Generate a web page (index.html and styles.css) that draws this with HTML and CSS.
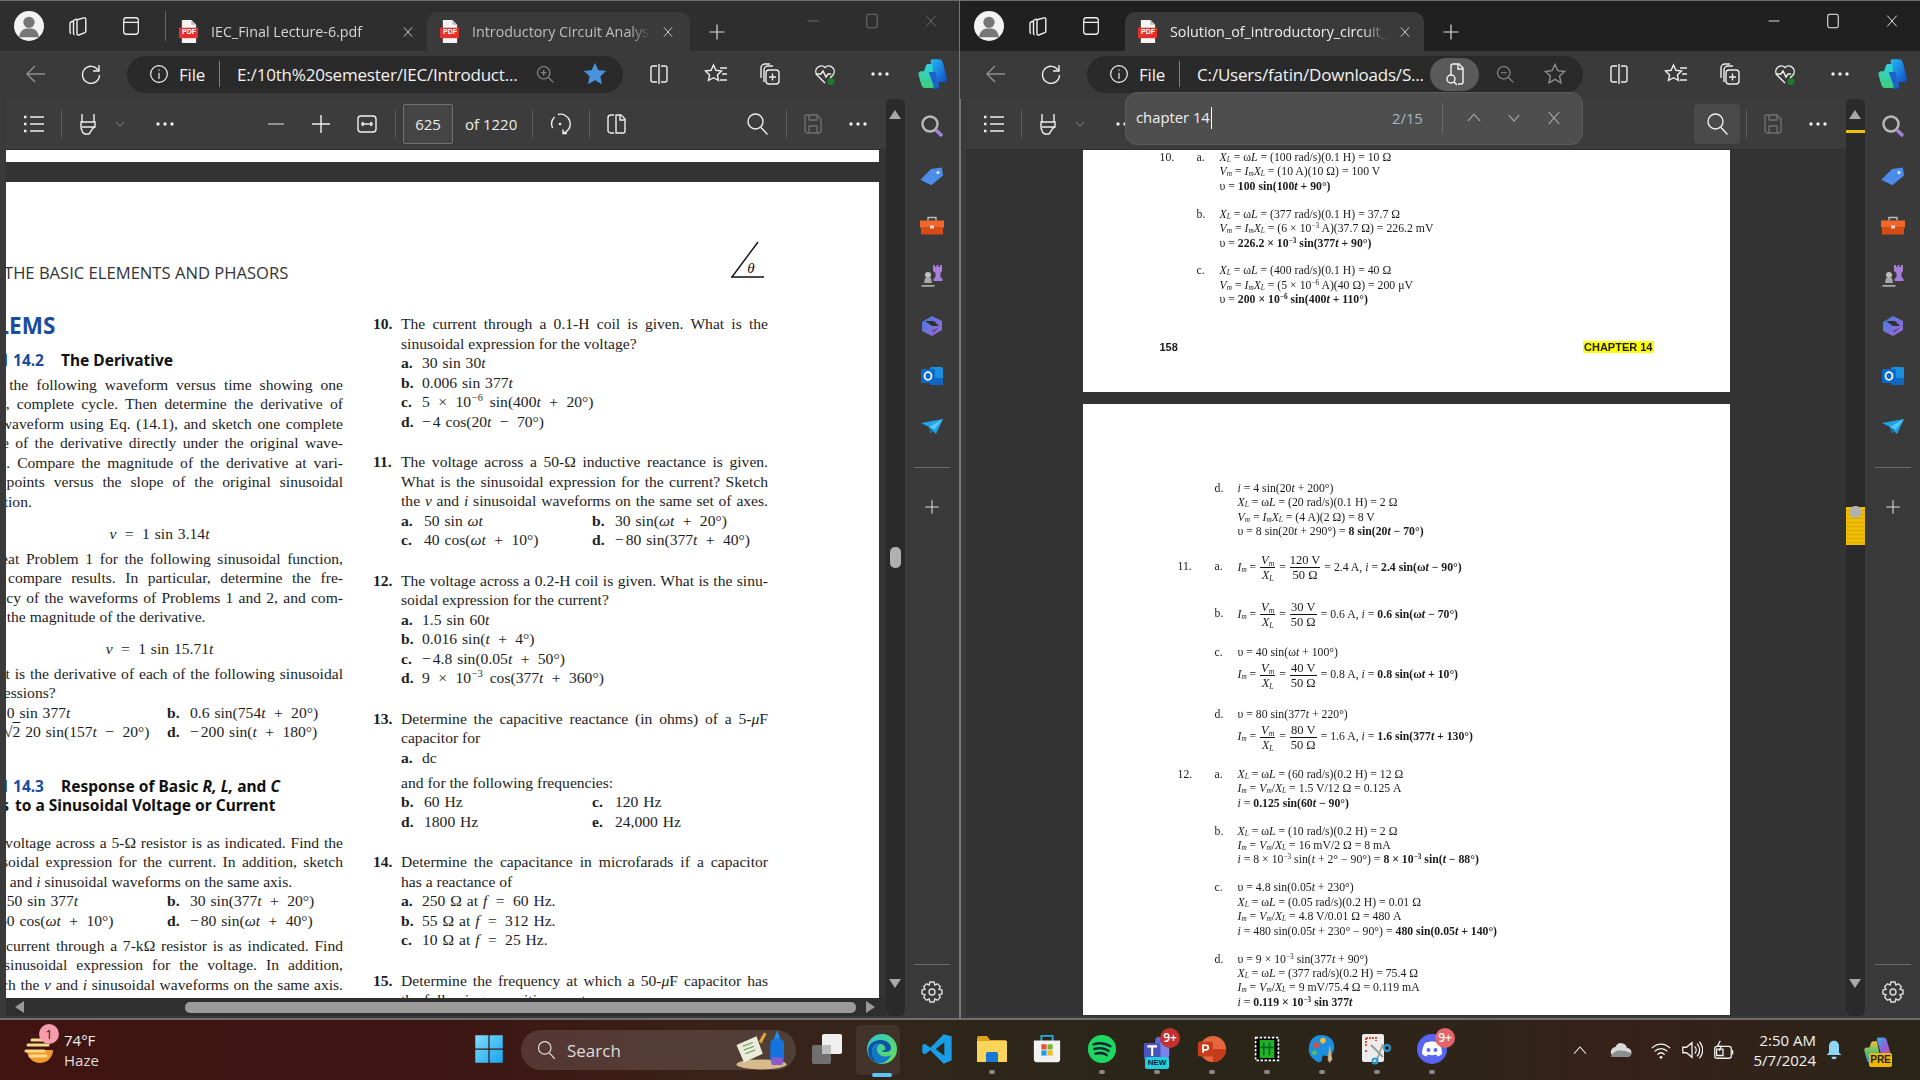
FILE: index.html
```html
<!DOCTYPE html>
<html lang="en">
<head>
<meta charset="utf-8">
<title>Split view PDFs</title>
<link rel="stylesheet" href="styles.css">
</head>
<body>
<svg class="sprite" aria-hidden="true">
<defs>
<linearGradient id="gCop" x1="0" y1="0" x2="1" y2="1"><stop offset="0" stop-color="#25b8ee"/><stop offset=".5" stop-color="#1c86e0"/><stop offset="1" stop-color="#1048c0"/></linearGradient>
<linearGradient id="gCop2" x1="0" y1="0" x2="0" y2="1"><stop offset="0" stop-color="#2fd0e0"/><stop offset="1" stop-color="#3fd07a"/></linearGradient>
<linearGradient id="gCop3" x1="0" y1="0" x2="1" y2="1"><stop offset="0" stop-color="#36b4e8"/><stop offset=".5" stop-color="#8a62d8"/><stop offset="1" stop-color="#e8488a"/></linearGradient>
<linearGradient id="gCop4" x1="0" y1="0" x2="0" y2="1"><stop offset="0" stop-color="#f0c040"/><stop offset=".5" stop-color="#5ac26a"/><stop offset="1" stop-color="#2c8fe0"/></linearGradient>
<linearGradient id="gEdge" x1="0" y1="0" x2="1" y2="1"><stop offset="0" stop-color="#2bc4d8"/><stop offset=".6" stop-color="#52d67c"/><stop offset="1" stop-color="#70e060"/></linearGradient>
<linearGradient id="gWin" x1="0" y1="0" x2="1" y2="1"><stop offset="0" stop-color="#7fdcfb"/><stop offset="1" stop-color="#16a4ec"/></linearGradient>
<linearGradient id="gBing" x1="0" y1="0" x2="1" y2="1"><stop offset="0" stop-color="#3c7ce0"/><stop offset="1" stop-color="#a868d8"/></linearGradient>
<symbol id="ws" viewBox="0 0 24 24"><path stroke-linejoin="round" d="M11 7c0-.8.5-1.300 1-1.500l6-1.700c1-.2 1.800.3 1.800 1.300V17c0 .9-.5 1.400-1 1.600l-6 2.400c-1 .3-1.800-.3-1.800-1.300z"/><path d="M11 5 8.500 5.800c-.6.2-1 .8-1 1.500v12c0 .8.4 1.200 1 1.500M7.500 7 5 8c-.6.2-1 .8-1 1.500v8.500c0 .8.4 1.200 1 1.500"/></symbol>
<symbol id="vt" viewBox="0 0 24 24"><rect x="4" y="3" width="16" height="18" rx="3"/><path d="M4 8h16"/></symbol>
<symbol id="x" viewBox="0 0 24 24"><path d="M5 4l14 16M19 4 5 20"/></symbol>
<symbol id="plus" viewBox="0 0 24 24"><path d="M12 3v18M3 12h18"/></symbol>
<symbol id="minus" viewBox="0 0 24 24"><path d="M4 12h16"/></symbol>
<symbol id="max" viewBox="0 0 24 24"><rect x="5" y="3" width="14" height="18" rx="2.500"/></symbol>
<symbol id="back" viewBox="0 0 24 24"><path d="M21 12H3M11 4l-8 8 8 8"/></symbol>
<symbol id="reload" viewBox="0 0 24 24"><path d="M19 8a8.500 8.500 0 1 0 1.500 5M20 3v6h-6"/></symbol>
<symbol id="info" viewBox="0 0 24 24"><circle cx="12" cy="12" r="10"/><path d="M12 10.500V18M12 6.500v1.500"/></symbol>
<symbol id="zoomin" viewBox="0 0 24 24"><circle cx="10.500" cy="10.500" r="7.500"/><path d="m16 16 6 6M7 10.500h7M10.500 7v7"/></symbol>
<symbol id="zoomout" viewBox="0 0 24 24"><circle cx="10.500" cy="10.500" r="7.500"/><path d="m16 16 6 6M7 10.500h7"/></symbol>
<symbol id="star" viewBox="0 0 24 24"><path d="m12 2.500 2.900 6.200 6.700.8-5 4.600 1.400 6.700L12 17.400 6 20.800l1.400-6.700-5-4.600 6.700-.8z"/></symbol>
<symbol id="split" viewBox="0 0 24 24"><path d="M12 2v20M10 4H6a2 2 0 0 0-2 2v12a2 2 0 0 0 2 2h4M14 4h4a2 2 0 0 1 2 2v12a2 2 0 0 1-2 2h-4"/></symbol>
<symbol id="fav" viewBox="0 0 24 24"><path d="m9.500 3 2.400 5.300 5.600.7-4.100 3.900 1.100 5.600-5-2.800-5 2.800 1.100-5.600L1.500 9l5.600-.7zM16 6h7M18 12h5M16 18h7"/></symbol>
<symbol id="coll" viewBox="0 0 24 24"><path d="M6 20V8a4 4 0 0 1 4-4h5M3 16V6a4 4 0 0 1 4-4h5"/><rect x="8" y="8" width="13" height="14" rx="3"/><path d="M14.500 11.500v7M11 15h7"/></symbol>
<symbol id="health" viewBox="0 0 24 24"><path d="M12 21 4 13a5.500 5.500 0 0 1 8-7.500A5.500 5.500 0 0 1 20 13l-3 3M2.500 12H8l2-3 3 6 2-3h3"/><circle cx="18" cy="19.500" r="3.500" fill="#1f7a2e" stroke="none"/></symbol>
<symbol id="dots" viewBox="0 0 24 24"><circle cx="5" cy="12" r="1.700" fill="currentColor" stroke="none"/><circle cx="12" cy="12" r="1.700" fill="currentColor" stroke="none"/><circle cx="19" cy="12" r="1.700" fill="currentColor" stroke="none"/></symbol>
<symbol id="copilot" viewBox="0 0 24 24"><path d="M12 1h5c1.800 0 2.800 1 3.200 2.500l3 12c.4 1.500-.4 2.500-2 2.500h-5L11 3.500c-.3-1 .2-2.500 1-2.500z" fill="url(#gCop)" stroke="none"/><path d="M9 4.500h3l3 15.500c.3 1.500-.6 2.500-2 2.500H7c-1.700 0-2.600-1-3-2.500L2 13c-.5-2 .2-3 2-3h2l1-3c.3-1.200 1-2.500 2-2.500z" fill="url(#gCop2)" stroke="none"/><path d="M9.500 10.500h5l3 10c.3 1.200-.6 2.500-2 2.500h-4c1.500-.5 2-1.500 1.500-3z" fill="#1c62cc" stroke="none"/></symbol>
<symbol id="copilot2" viewBox="0 0 24 24"><path d="M13 2h4c1.800 0 2.600 1 3 2.500l3 11c.4 1.500-.4 2.500-2 2.500h-5L12 4c-.3-1 .2-2 1-2z" fill="url(#gCop3)" stroke="none"/><path d="M9 5h3l3 15c.3 1.500-.6 2.500-2 2.500H7c-1.700 0-2.600-1-3-2.500L2 13c-.5-2 .2-3 2-3h2l1-3c.3-1.200 1-2 2-2z" fill="url(#gCop4)" stroke="none"/></symbol>
<symbol id="list" viewBox="0 0 24 24"><path d="M8 5h14M8 12h14M8 19h14"/><path d="M2 5h2.500M2 12h2.500M2 19h2.500" stroke-width="2.500"/></symbol>
<symbol id="hl" viewBox="0 0 24 24"><path d="M6 2v8M18 2v8M5 10h14v5l-2 1-4 6h-4l-2-1-2-5zM6 15h12"/></symbol>
<symbol id="chev" viewBox="0 0 24 24"><path d="m5 8 7 8 7-8"/></symbol>
<symbol id="up" viewBox="0 0 24 24"><path d="m4 16 8-9 8 9"/></symbol>
<symbol id="fit" viewBox="0 0 24 24"><rect x="3" y="4" width="18" height="16" rx="3"/><path d="M6.500 12h11M6.500 12l2-2M6.500 12l2 2M17.500 12l-2-2M17.500 12l-2 2"/></symbol>
<symbol id="rot" viewBox="0 0 24 24"><path d="M9 2.500a9.500 9.500 0 0 1 5 18.800M14 17.500v4h4M5.500 5a9.500 9.500 0 0 0-1.800 11"/><circle cx="11" cy="12" r="1.300" fill="currentColor" stroke="none"/></symbol>
<symbol id="pv" viewBox="0 0 24 24"><path d="M12 3h5l4 4v12a2 2 0 0 1-2 2h-7zM16 3v5h5M10 3H7a3 3 0 0 0-3 3v13a3 3 0 0 0 3 2h3" /></symbol>
<symbol id="search" viewBox="0 0 24 24"><circle cx="10.500" cy="9.500" r="7.500"/><path d="m16 15.500 6.500 7"/></symbol>
<symbol id="save" viewBox="0 0 24 24"><path d="M6 3h10l4 4v11a3 3 0 0 1-3 3H7a3 3 0 0 1-3-3V5a2 2 0 0 1 2-2zM8 3v5h8V3M8 21v-7h8v7"/></symbol>
<symbol id="readfile" viewBox="0 0 24 24"><path d="M8 13V4a2 2 0 0 1 2-2h6l4 4v14a2 2 0 0 1-2 2h-3M15 2v5h5"/><circle cx="8" cy="17" r="4"/><path d="m11 20 3 3"/></symbol>
<symbol id="sSearch" viewBox="0 0 24 24"><circle cx="10" cy="10" r="7.500" stroke="#b8b8b8" stroke-width="2.500" fill="none"/><path d="m16 16 6 6" stroke="#a77fd8" stroke-width="3.500"/></symbol>
<symbol id="sTag" viewBox="0 0 24 24"><path d="M0 14 12 5h11v8l-13 8z" fill="#4b8de8" stroke="none" transform="rotate(-8 12 12)"/><circle cx="18" cy="8.500" r="1.600" fill="#dfe9f8" stroke="none"/></symbol>
<symbol id="sBox" viewBox="0 0 24 24"><path d="M8 6.500V3.500h8v3" stroke="#bdbdbd" stroke-width="1.400" fill="none"/><rect x="0" y="6.500" width="24" height="7" fill="#f2662a" stroke="none"/><rect x="1" y="13.500" width="22" height="7" fill="#d84b15" stroke="none"/><rect x="10" y="11.500" width="4" height="3" fill="#d8d8d8" stroke="none"/></symbol>
<symbol id="sChess" viewBox="0 0 24 24"><path d="M14 3h2v2h1.500V3h2v2h1.500V3h2v6l-1.500 2v4l2 2v2h-9v-2l2-2v-4L14 9z" fill="#a87fd8" stroke="none" transform="translate(-1 -2)"/><circle cx="8" cy="11" r="3" fill="#bfbfbf" stroke="none"/><path d="M5 14h6l1 5H4zM1.500 21h13v1.800h-13z" fill="#a8a8a8" stroke="none"/></symbol>
<symbol id="sBing" viewBox="0 0 24 24"><path d="M12 2 22 7v9l-10 6L2 17V8z" fill="url(#gBing)" stroke="none"/><path d="M5 7h9l5 5H12z" fill="#2f2f2f" stroke="none"/><path d="M12 16.500 20 13l-7 6z" fill="#2f2f2f" stroke="none" opacity=".5"/></symbol>
<symbol id="sOut" viewBox="0 0 24 24"><rect x="10" y="3" width="13" height="18" rx="1.500" fill="#1a8fe0" stroke="none"/><path d="M10 14h13v7H10z" fill="#1066c4" stroke="none"/><rect x="1" y="5" width="14" height="14" rx="1.500" fill="#0b6ac8" stroke="none"/><ellipse cx="8" cy="12" rx="3.500" ry="3.800" fill="none" stroke="#fff" stroke-width="1.800"/></symbol>
<symbol id="sTg" viewBox="0 0 24 24"><path d="M1 9 23 5 16 20 9 13z" fill="#1fa3e8" stroke="none"/><path d="M9 13l14-8-9 11-3 3z" fill="#5cc8f6" stroke="none"/><path d="M9 13l2 6 3-3z" fill="#0d6fb0" stroke="none"/></symbol>
<symbol id="gear" viewBox="0 0 24 24"><path d="M10 2h4l.8 3 2.700-1.200 2.800 2.800L19 9.300l3 .7v4l-3 .7 1.300 2.700-2.800 2.800-2.700-1.200-.8 3h-4l-.8-3-2.700 1.200-2.800-2.800L5 14.700 2 14v-4l3-.7-1.300-2.700 2.800-2.800L9.200 5z"/><circle cx="12" cy="12" r="3"/></symbol>
<symbol id="weather" viewBox="0 0 32 32"><path d="M3 15h26a13 13 0 0 1-26 0z" fill="#f29b2c" stroke="none" transform="translate(0 1)"/><path d="M8 6h10M4 11h20M2 17h18M6 22h16" stroke="#f7d98a" stroke-width="3" fill="none" stroke-linecap="round"/></symbol>
<symbol id="win" viewBox="0 0 24 24"><path d="M1 1h10.500v10.500H1zM12.500 1H23v10.500H12.500zM1 12.500h10.500V23H1zM12.500 12.500H23V23H12.500z" fill="url(#gWin)" stroke="none"/></symbol>
<symbol id="scene" viewBox="0 0 44 32"><ellipse cx="24" cy="27.500" rx="20" ry="4" fill="#d8b98a" stroke="none"/><path d="M4 12 20 5l5 14-15 7z" fill="#e8ecd8" stroke="none"/><path d="M9 13l8-3M10 16l8-3M11 19l8-3" stroke="#6a9a5a" stroke-width="1"/><path d="M22 9l4-7 2 1-4 8z" fill="#e8a030" stroke="none"/><rect x="31" y="7" width="11" height="20" rx="4" fill="#1573e0" stroke="none"/><path d="M36.500 0l2.500 7h-5z" fill="#1a90f0" stroke="none"/><rect x="32" y="22" width="9" height="6" rx="1" fill="#8a5ac8" stroke="none"/></symbol>
<symbol id="tview" viewBox="0 0 32 32"><rect x="1" y="12" width="19" height="19" rx="2" fill="#6f6f6f" stroke="none"/><rect x="11" y="1" width="20" height="20" rx="2" fill="#efefef" stroke="none"/><rect x="11" y="12" width="9" height="9" fill="#bdbdbd" stroke="none"/></symbol>
<symbol id="edge" viewBox="0 0 32 32"><circle cx="16" cy="16" r="15" fill="url(#gEdge)" stroke="none"/><path d="M2 17C3 9 10 7 15 7c6 0 10 4 10 8 0 3-3 4-6 4-2 0-3-1-3-2 3 1 4-1 3-3-1-3-5-4-8-3-4 1-5 5-5 8 0 5 4 10 10 11-8 1-14-5-14-13z" fill="#0a55a8" stroke="none"/><path d="M6 19c0-4 3-9 8-8-3 2-4 5-2 9 2 3 7 5 13 2-2 5-7 9-12 8-5-2-7-6-7-11z" fill="#1478c8" stroke="none"/></symbol>
<symbol id="vsc" viewBox="0 0 24 24"><path fill-rule="evenodd" d="M17 1 7 11 3 8 1 9v6l2 1 4-3 10 10 6-2.500v-18zM17.500 7 11 12l6.500 5z" fill="#1a9de8" stroke="none"/></symbol>
<symbol id="folder" viewBox="0 0 32 32"><path d="M1 5a2 2 0 0 1 2-2h8l3 4h16v3H1z" fill="#e0a020" stroke="none"/><path d="M1 8h30v21H1z" fill="#fbd45a" stroke="none"/><path d="M10 21a2 2 0 0 1 2-2h8a2 2 0 0 1 2 2v8H10z" fill="#1678d0" stroke="none"/></symbol>
<symbol id="store" viewBox="0 0 32 32"><path d="M10 8V2h12v6" stroke="#2aa8e0" stroke-width="2" fill="none"/><path d="M2 7h28v20a3 3 0 0 1-3 3H5a3 3 0 0 1-3-3z" fill="#f2f2f2" stroke="none"/><rect x="10" y="11" width="5.500" height="5.500" fill="#e8502a" stroke="none"/><rect x="16.500" y="11" width="5.500" height="5.500" fill="#74b82a" stroke="none"/><rect x="10" y="17.500" width="5.500" height="5.500" fill="#1aa0e8" stroke="none"/><rect x="16.500" y="17.500" width="5.500" height="5.500" fill="#f4b81e" stroke="none"/></symbol>
<symbol id="spot" viewBox="0 0 32 32"><circle cx="16" cy="16" r="15" fill="#1ed760" stroke="none"/><path d="M7 11c6-2 13-1 18 2M8 16c5-1.500 11-1 15 2M9 21c4-1 9-1 12 1.500" stroke="#123" stroke-width="2.600" fill="none" stroke-linecap="round"/></symbol>
<symbol id="teams" viewBox="0 0 32 32"><rect x="14" y="6" width="16" height="20" rx="3" fill="#7b83eb" stroke="none"/><circle cx="18" cy="6" r="4" fill="#6068c8" stroke="none"/><rect x="1" y="9" width="19" height="19" rx="2" fill="#4b53bc" stroke="none"/><path d="M5 13h11M10.500 13v11" stroke="#fff" stroke-width="2.400"/></symbol>
<symbol id="ppt" viewBox="0 0 32 32"><circle cx="17" cy="16" r="14" fill="#e8663c" stroke="none"/><path d="M17 16h14a14 14 0 0 1-14 14z" fill="#c43c1c" stroke="none"/><rect x="1" y="8" width="16" height="16" rx="2" fill="#c43e1c" stroke="none"/><path d="M6.500 20v-8h3a2.500 2.500 0 0 1 0 5h-3" stroke="#fff" stroke-width="1.800" fill="none"/></symbol>
<symbol id="chip" viewBox="0 0 32 32"><rect x="2" y="2" width="28" height="28" fill="#000" stroke="#fff" stroke-width="2" stroke-dasharray="3 2"/><rect x="7" y="5" width="18" height="22" fill="#22b522" stroke="none"/><path d="M12 8v16M19 8v16M8 14h16" stroke="#063" stroke-width="2"/></symbol>
<symbol id="paint" viewBox="0 0 32 32"><path d="M15 1c9 0 15 6 14 14-1 7-6 10-10 8-3-1-3 2-3 4 0 3-3 4-6 2C4 25 1 20 2 14 3 6 8 1 15 1z" fill="#1c8ee0" stroke="none"/><circle cx="10" cy="12" r="3" fill="#e04a3a" stroke="none"/><circle cx="17" cy="7" r="3" fill="#f0c030" stroke="none"/><circle cx="8" cy="20" r="2.500" fill="#60c040" stroke="none"/><path d="M24 11l3 16-3 4-2-4z" fill="#c8b088" stroke="none"/></symbol>
<symbol id="snip" viewBox="0 0 32 32"><rect x="1" y="1" width="22" height="28" rx="2" fill="#ececec" stroke="none"/><path d="M5 5h10v3M5 5v8M5 17v3" stroke="#e0503a" stroke-width="2" stroke-dasharray="2 1" fill="none"/><path d="M10 12l12 12M22 11l-7 18" stroke="#9a9a9a" stroke-width="1.800"/><circle cx="26" cy="15" r="3" stroke="#2a9ad8" stroke-width="2" fill="none"/><circle cx="14" cy="28" r="2.500" stroke="#2a9ad8" stroke-width="2" fill="none"/></symbol>
<symbol id="disc" viewBox="0 0 32 32"><circle cx="16" cy="16" r="15" fill="#5865f2" stroke="none"/><path d="M9 10c4-2 10-2 14 0 2 3 3 7 3 11-2 1.500-3 2-4.500 2.500l-1-2c-3 1-6 1-9 0l-1 2C9 23 8 22.500 6 21c0-4 1-8 3-11z" fill="#fff" stroke="none"/><circle cx="12.500" cy="17" r="2" fill="#5865f2" stroke="none"/><circle cx="19.500" cy="17" r="2" fill="#5865f2" stroke="none"/></symbol>
<symbol id="tup" viewBox="0 0 24 24"><path d="m4 17 8-9 8 9"/></symbol>
<symbol id="cloud" viewBox="0 0 24 24"><path d="M7 19a5 5 0 0 1-.5-10A6 6 0 0 1 18 10a4.500 4.500 0 0 1 0 9z" fill="#d8d8d8" stroke="none"/><path d="M2 19c2-6 8-9 20-4v1a4 4 0 0 1-4 3z" fill="#8f8f8f" stroke="none"/></symbol>
<symbol id="wifi" viewBox="0 0 24 24"><path d="M2 10c6-6 14-6 20 0M5 13.500c4-4 10-4 14 0M8 17c2.500-2.500 5.500-2.500 8 0"/><circle cx="12" cy="20" r="1.500" fill="currentColor" stroke="none"/></symbol>
<symbol id="vol" viewBox="0 0 24 24"><path d="M2 9v6h4l6 5V4L6 9zM15 8a6 6 0 0 1 0 8M17.500 5a10 10 0 0 1 0 14M20 3a13 13 0 0 1 0 18"/></symbol>
<symbol id="batt" viewBox="0 0 24 24"><rect x="3" y="8" width="18" height="13" rx="2.500"/><path d="M22.500 12v5M5 11h7v7H5z"/><path d="M9 2 6 8h4L8 13" /></symbol>
<symbol id="bell" viewBox="0 0 24 24"><path d="M12 1c4 0 6 3 6 7v7l3 3H3l3-3V8c0-4 2-7 6-7z" fill="#8fd8f5" stroke="none"/><path d="M9 20a3 3 0 0 0 6 0z" fill="#8fd8f5" stroke="none"/></symbol>
<symbol id="pdf" viewBox="0 0 20 24"><path d="M3 0h10l5 5v19H3z" fill="#f4f4f4" stroke="none"/><rect x="0" y="8" width="20" height="11" fill="#e3322e" stroke="none"/><path d="M13 0v5h5z" fill="#bbb" stroke="none"/></symbol>
<symbol id="angle" viewBox="0 0 34 38"><path d="M1 36 27 1M0 36h33" stroke="#111" stroke-width="1.400" fill="none"/></symbol>
</defs>
</svg>

<div class="desktop">
<main class="windows">

<section class="win win-left">
  <header class="titlebar">
    <div class="c-avatar"><span class="avatar"><svg class="ava-ic" viewBox="0 0 24 24"><circle cx="12" cy="9" r="4.500" fill="#777"/><path d="M4 21c1-6 4-7 8-7s7 1 8 7z" fill="#777"/></svg></span></div>
    <div class="c-ws"><svg class="ic i24"><use href="#ws"/></svg></div>
    <div class="c-vt"><svg class="ic i22"><use href="#vt"/></svg></div>
    <span class="vsep"></span>
    <div class="tab tab-idle">
      <span class="pdf-ic"><svg class="pdf-svg"><use href="#pdf"/></svg><span class="pdf-tx">PDF</span></span>
      <span class="tab-name">IEC_Final Lecture-6.pdf</span>
      <svg class="ic i14 tab-x"><use href="#x"/></svg>
    </div>
    <div class="tab tab-on tab-wide">
      <span class="pdf-ic"><svg class="pdf-svg"><use href="#pdf"/></svg><span class="pdf-tx">PDF</span></span>
      <span class="tab-name dim-name">Introductory Circuit Analysis</span>
      <svg class="ic i14 tab-x"><use href="#x"/></svg>
    </div>
    <svg class="ic i20 new-tab"><use href="#plus"/></svg>
    <div class="winctl winctl-dim">
      <svg class="ic i16"><use href="#minus"/></svg>
      <svg class="ic i18"><use href="#max"/></svg>
      <svg class="ic i16"><use href="#x"/></svg>
    </div>
  </header>
  <nav class="navbar">
    <svg class="ic i24 faint"><use href="#back"/></svg>
    <svg class="ic i24 m31"><use href="#reload"/></svg>
    <div class="addr m24">
      <svg class="ic i20"><use href="#info"/></svg>
      <span class="addr-file">File</span>
      <span class="addr-sep"></span>
      <span class="addr-url">E:/10th%20semester/IEC/Introduct...</span>
      <svg class="ic i20 faint"><use href="#zoomin"/></svg>
      <svg class="ic i24 m28 star-on"><use href="#star"/></svg>
    </div>
    <svg class="ic i24 m24"><use href="#split"/></svg>
    <svg class="ic i24 m33"><use href="#fav"/></svg>
    <svg class="ic i24 m30"><use href="#coll"/></svg>
    <svg class="ic i24 m31"><use href="#health"/></svg>
    <svg class="ic i24 m31"><use href="#dots"/></svg>
    <svg class="ic i32 m24"><use href="#copilot"/></svg>
  </nav>
  <div class="body">
    <div class="pane">
      <div class="pdfbar">
        <svg class="ic i24"><use href="#list"/></svg>
        <span class="tsep m15"></span>
        <svg class="ic i24 m14"><use href="#hl"/></svg>
        <svg class="ic i14 m13 faint"><use href="#chev"/></svg>
        <svg class="ic i24 m26"><use href="#dots"/></svg>
        <svg class="ic i24 m87 soft"><use href="#minus"/></svg>
        <svg class="ic i24 m21"><use href="#plus"/></svg>
        <svg class="ic i24 m22"><use href="#fit"/></svg>
        <span class="tsep m16"></span>
        <span class="pagebox m7">625</span>
        <span class="pagecount m12">of 1220</span>
        <span class="tsep m15"></span>
        <svg class="ic i24 m16"><use href="#rot"/></svg>
        <span class="tsep m16"></span>
        <svg class="ic i24 m14"><use href="#pv"/></svg>
        <div class="pdfbar-r">
          <svg class="ic i24"><use href="#search"/></svg>
          <span class="tsep m17"></span>
          <svg class="ic i24 m14 disabled"><use href="#save"/></svg>
          <svg class="ic i24 m21"><use href="#dots"/></svg>
        </div>
      </div>
      <div class="viewer viewer-left">
        <div class="prev-page"></div>
        <article class="book">
          <div class="runhead">
            <span class="runhead-t">THE BASIC ELEMENTS AND PHASORS</span>
            <span class="angle"><svg class="angle-svg"><use href="#angle"/></svg><i class="angle-t">θ</i></span>
          </div>
          <div class="cols">
            <div class="col col-a">
              <h2 class="prob-h">PROBLEMS</h2>
              <h3 class="sec sec-1"><span class="sec-no">SECTION 14.2</span><span class="sec-ti">The Derivative</span></h3>
              <div class="prob p-first">
                <span class="n">1.</span>
                <div class="bd">
                  <div class="j">Plot the following waveform versus time showing one</div>
                  <div class="j">clear, complete cycle. Then determine the derivative of</div>
                  <div class="j">the waveform using Eq. (14.1), and sketch one complete</div>
                  <div class="j">cycle of the derivative directly under the original wave-</div>
                  <div class="j">form. Compare the magnitude of the derivative at vari-</div>
                  <div class="j">ous points versus the slope of the original sinusoidal</div>
                  <div>function.</div>
                </div>
              </div>
              <div class="eq eq-1"><i>v</i> <span class="op">=</span> 1 sin 3.14<i>t</i></div>
              <div class="prob p-tight">
                <span class="n">2.</span>
                <div class="bd">
                  <div class="j">Repeat Problem 1 for the following sinusoidal function,</div>
                  <div class="j">and compare results. In particular, determine the fre-</div>
                  <div class="j">quency of the waveforms of Problems 1 and 2, and com-</div>
                  <div>pare the magnitude of the derivative.</div>
                </div>
              </div>
              <div class="eq eq-2"><i>v</i> <span class="op">=</span> 1 sin 15.71<i>t</i></div>
              <div class="prob p-tight">
                <span class="n">3.</span>
                <div class="bd">
                  <div class="j">What is the derivative of each of the following sinusoidal</div>
                  <div>expressions?</div>
                  <div class="opt2"><div><b class="lab">a.</b>10 sin 377<i>t</i></div><div><b class="lab">b.</b>0.6 sin(754<i>t</i> <span class="op">+</span> 20°)</div></div>
                  <div class="opt2"><div><b class="lab">c.</b><span class="root">√<span class="rad">2</span></span> 20 sin(157<i>t</i> <span class="op">−</span> 20°)</div><div><b class="lab">d.</b><span class="neg">−</span>200 sin(<i>t</i> <span class="op">+</span> 180°)</div></div>
                </div>
              </div>
              <h3 class="sec sec-2"><span class="sec-no">SECTION 14.3</span><span class="sec-ti">Response of Basic <i>R, L,</i> and <i>C</i></span></h3>
              <h3 class="sec"><span class="sec-no sec-no2">Elements</span><span class="sec-ti2">to a Sinusoidal Voltage or Current</span></h3>
              <div class="prob p-sec">
                <span class="n">4.</span>
                <div class="bd">
                  <div class="j">The voltage across a 5-Ω resistor is as indicated. Find the</div>
                  <div class="j">sinusoidal expression for the current. In addition, sketch</div>
                  <div>the <i>v</i> and <i>i</i> sinusoidal waveforms on the same axis.</div>
                  <div class="opt2"><div><b class="lab">a.</b>150 sin 377<i>t</i></div><div><b class="lab">b.</b>30 sin(377<i>t</i> <span class="op">+</span> 20°)</div></div>
                  <div class="opt2"><div><b class="lab">c.</b>60 cos(<i>ωt</i> <span class="op">+</span> 10°)</div><div><b class="lab">d.</b><span class="neg">−</span>80 sin(<i>ωt</i> <span class="op">+</span> 40°)</div></div>
                </div>
              </div>
              <div class="prob p-tight">
                <span class="n">5.</span>
                <div class="bd">
                  <div class="j">The current through a 7-kΩ resistor is as indicated. Find</div>
                  <div class="j">the sinusoidal expression for the voltage. In addition,</div>
                  <div class="j">sketch the <i>v</i> and <i>i</i> sinusoidal waveforms on the same axis.</div>
                </div>
              </div>
            </div>
            <div class="col col-b">
              <div class="prob">
                <span class="n">10.</span>
                <div class="bd">
                  <div class="j">The current through a 0.1-H coil is given. What is the</div>
                  <div>sinusoidal expression for the voltage?</div>
                  <div class="opt"><b class="lab">a.</b>30 sin 30<i>t</i></div>
                  <div class="opt"><b class="lab">b.</b>0.006 sin 377<i>t</i></div>
                  <div class="opt"><b class="lab">c.</b>5 <span class="op">×</span> 10<sup>−6</sup> sin(400<i>t</i> <span class="op">+</span> 20°)</div>
                  <div class="opt"><b class="lab">d.</b><span class="neg">−</span>4 cos(20<i>t</i> <span class="op">−</span> 70°)</div>
                </div>
              </div>
              <div class="prob p-gap">
                <span class="n">11.</span>
                <div class="bd">
                  <div class="j">The voltage across a 50-Ω inductive reactance is given.</div>
                  <div class="j">What is the sinusoidal expression for the current? Sketch</div>
                  <div class="j">the <i>v</i> and <i>i</i> sinusoidal waveforms on the same set of axes.</div>
                  <div class="opt2"><div><b class="lab">a.</b>50 sin <i>ωt</i></div><div><b class="lab">b.</b>30 sin(<i>ωt</i> <span class="op">+</span> 20°)</div></div>
                  <div class="opt2"><div><b class="lab">c.</b>40 cos(<i>ωt</i> <span class="op">+</span> 10°)</div><div><b class="lab">d.</b><span class="neg">−</span>80 sin(377<i>t</i> <span class="op">+</span> 40°)</div></div>
                </div>
              </div>
              <div class="prob p-gap">
                <span class="n">12.</span>
                <div class="bd">
                  <div class="j">The voltage across a 0.2-H coil is given. What is the sinu-</div>
                  <div>soidal expression for the current?</div>
                  <div class="opt"><b class="lab">a.</b>1.5 sin 60<i>t</i></div>
                  <div class="opt"><b class="lab">b.</b>0.016 sin(<i>t</i> <span class="op">+</span> 4°)</div>
                  <div class="opt"><b class="lab">c.</b><span class="neg">−</span>4.8 sin(0.05<i>t</i> <span class="op">+</span> 50°)</div>
                  <div class="opt"><b class="lab">d.</b>9 <span class="op">×</span> 10<sup>−3</sup> cos(377<i>t</i> <span class="op">+</span> 360°)</div>
                </div>
              </div>
              <div class="prob p-gap">
                <span class="n">13.</span>
                <div class="bd">
                  <div class="j">Determine the capacitive reactance (in ohms) of a 5-<i>μ</i>F</div>
                  <div>capacitor for</div>
                  <div class="opt"><b class="lab">a.</b>dc</div>
                  <div class="and">and for the following frequencies:</div>
                  <div class="opt2"><div><b class="lab">b.</b>60 Hz</div><div><b class="lab">c.</b>120 Hz</div></div>
                  <div class="opt2"><div><b class="lab">d.</b>1800 Hz</div><div><b class="lab">e.</b>24,000 Hz</div></div>
                </div>
              </div>
              <div class="prob p-gap">
                <span class="n">14.</span>
                <div class="bd">
                  <div class="j">Determine the capacitance in microfarads if a capacitor</div>
                  <div>has a reactance of</div>
                  <div class="opt"><b class="lab">a.</b>250 Ω at <i>f</i> <span class="op">=</span> 60 Hz.</div>
                  <div class="opt"><b class="lab">b.</b>55 Ω at <i>f</i> <span class="op">=</span> 312 Hz.</div>
                  <div class="opt"><b class="lab">c.</b>10 Ω at <i>f</i> <span class="op">=</span> 25 Hz.</div>
                </div>
              </div>
              <div class="prob p-gap">
                <span class="n">15.</span>
                <div class="bd">
                  <div class="j">Determine the frequency at which a 50-<i>μ</i>F capacitor has</div>
                  <div>the following capacitive reactances:</div>
                </div>
              </div>
            </div>
          </div>
        </article>
      </div>
      <div class="hscroll">
        <span class="tri-l"></span>
        <span class="hthumb"></span>
        <span class="tri-r"></span>
      </div>
    </div>
    <div class="vscroll">
      <span class="tri-u"></span>
      <span class="vthumb vthumb-l"></span>
      <span class="tri-d"></span>
    </div>
    <aside class="sidebar">
      <div class="sb"><svg class="ic i24"><use href="#sSearch"/></svg></div>
      <div class="sb"><svg class="ic i24"><use href="#sTag"/></svg></div>
      <div class="sb"><svg class="ic i24"><use href="#sBox"/></svg></div>
      <div class="sb"><svg class="ic i24"><use href="#sChess"/></svg></div>
      <div class="sb"><svg class="ic i24"><use href="#sBing"/></svg></div>
      <div class="sb"><svg class="ic i24"><use href="#sOut"/></svg></div>
      <div class="sb"><svg class="ic i24"><use href="#sTg"/></svg></div>
      <span class="sb-sep sb-sep1"></span>
      <svg class="ic i18 sb-plus"><use href="#plus"/></svg>
      <span class="sb-sep sb-sep2"></span>
      <svg class="ic i24 sb-gear"><use href="#gear"/></svg>
    </aside>
  </div>
</section>

<section class="win win-right">
  <header class="titlebar">
    <div class="c-avatar"><span class="avatar"><svg class="ava-ic" viewBox="0 0 24 24"><circle cx="12" cy="9" r="4.500" fill="#777"/><path d="M4 21c1-6 4-7 8-7s7 1 8 7z" fill="#777"/></svg></span></div>
    <div class="c-ws"><svg class="ic i24"><use href="#ws"/></svg></div>
    <div class="c-vt"><svg class="ic i22"><use href="#vt"/></svg></div>
    <div class="tab tab-on tab-r">
      <span class="pdf-ic"><svg class="pdf-svg"><use href="#pdf"/></svg><span class="pdf-tx">PDF</span></span>
      <span class="tab-name">Solution_of_introductory_circuit_analysis</span>
      <svg class="ic i14 tab-x"><use href="#x"/></svg>
    </div>
    <svg class="ic i20 new-tab"><use href="#plus"/></svg>
    <div class="winctl">
      <svg class="ic i16"><use href="#minus"/></svg>
      <svg class="ic i18"><use href="#max"/></svg>
      <svg class="ic i16"><use href="#x"/></svg>
    </div>
  </header>
  <nav class="navbar">
    <svg class="ic i24 faint"><use href="#back"/></svg>
    <svg class="ic i24 m31"><use href="#reload"/></svg>
    <div class="addr m24">
      <svg class="ic i20"><use href="#info"/></svg>
      <span class="addr-file">File</span>
      <span class="addr-sep"></span>
      <span class="addr-url">C:/Users/fatin/Downloads/S...</span>
      <span class="addr-btn"><svg class="ic i24"><use href="#readfile"/></svg></span>
      <svg class="ic i20 m16 faint"><use href="#zoomout"/></svg>
      <svg class="ic i24 m28 faint"><use href="#star"/></svg>
    </div>
    <svg class="ic i24 m24"><use href="#split"/></svg>
    <svg class="ic i24 m33"><use href="#fav"/></svg>
    <svg class="ic i24 m30"><use href="#coll"/></svg>
    <svg class="ic i24 m31"><use href="#health"/></svg>
    <svg class="ic i24 m31"><use href="#dots"/></svg>
    <svg class="ic i32 m24"><use href="#copilot"/></svg>
  </nav>
  <div class="findbar">
    <span class="find-q">chapter 14<span class="caret"></span></span>
    <span class="find-n">2/15</span>
    <span class="find-sep"></span>
    <svg class="ic i18 m22 soft"><use href="#up"/></svg>
    <svg class="ic i18 m22 soft"><use href="#chev"/></svg>
    <svg class="ic i18 m22 soft"><use href="#x"/></svg>
  </div>
  <div class="body">
    <div class="pane">
      <div class="pdfbar">
        <svg class="ic i24"><use href="#list"/></svg>
        <span class="tsep m15"></span>
        <svg class="ic i24 m14"><use href="#hl"/></svg>
        <svg class="ic i14 m13 faint"><use href="#chev"/></svg>
        <svg class="ic i24 m26"><use href="#dots"/></svg>
        <div class="pdfbar-r">
          <span class="tool-on"><svg class="ic i24"><use href="#search"/></svg></span>
          <span class="tsep m17"></span>
          <svg class="ic i24 m14 disabled"><use href="#save"/></svg>
          <svg class="ic i24 m21"><use href="#dots"/></svg>
        </div>
      </div>
      <div class="viewer viewer-right">
        <article class="sol sol-1">
          <div class="srow"><span class="sn">10.</span><span class="sl">a.</span><div class="sb-txt">
            <div><i>X<sub>L</sub></i> = ω<i>L</i> = (100 rad/s)(0.1 H) = 10 Ω</div>
            <div><i>V<sub>m</sub></i> = <i>I<sub>m</sub>X<sub>L</sub></i> = (10 A)(10 Ω) = 100 V</div>
            <div>υ = <b>100 sin(100<i>t</i> + 90°)</b></div>
          </div></div>
          <div class="srow sgap"><span class="sn"></span><span class="sl">b.</span><div class="sb-txt">
            <div><i>X<sub>L</sub></i> = ω<i>L</i> = (377 rad/s)(0.1 H) = 37.7 Ω</div>
            <div><i>V<sub>m</sub></i> = <i>I<sub>m</sub>X<sub>L</sub></i> = (6 × 10<sup>−3</sup> A)(37.7 Ω) = 226.2 mV</div>
            <div>υ = <b>226.2 × 10<sup>−3</sup> sin(377<i>t</i> + 90°)</b></div>
          </div></div>
          <div class="srow sgap"><span class="sn"></span><span class="sl">c.</span><div class="sb-txt">
            <div><i>X<sub>L</sub></i> = ω<i>L</i> = (400 rad/s)(0.1 H) = 40 Ω</div>
            <div><i>V<sub>m</sub></i> = <i>I<sub>m</sub>X<sub>L</sub></i> = (5 × 10<sup>−6</sup> A)(40 Ω) = 200 μV</div>
            <div>υ = <b>200 × 10<sup>−6</sup> sin(400<i>t</i> + 110°)</b></div>
          </div></div>
          <div class="sfoot"><span class="pg-no">158</span><span class="ch-hit">CHAPTER 14</span></div>
        </article>
        <article class="sol sol-2">
          <div class="srow"><span class="sn"></span><span class="sl">d.</span><div class="sb-txt">
            <div><i>i</i> = 4 sin(20<i>t</i> + 200°)</div>
            <div><i>X<sub>L</sub></i> = ω<i>L</i> = (20 rad/s)(0.1 H) = 2 Ω</div>
            <div><i>V<sub>m</sub></i> = <i>I<sub>m</sub>X<sub>L</sub></i> = (4 A)(2 Ω) = 8 V</div>
            <div>υ = 8 sin(20<i>t</i> + 290°) = <b>8 sin(20<i>t</i> − 70°)</b></div>
          </div></div>
          <div class="srow frow fgap"><span class="sn">11.</span><span class="sl">a.</span><div class="sb-txt">
            <div class="fline"><i>I<sub>m</sub></i> = <span class="fr fr-a"><span><i>V<sub>m</sub></i></span><span><i>X<sub>L</sub></i></span></span> = <span class="fr"><span>120 V</span><span>50 Ω</span></span> = 2.4 A, <i>i</i> = <b>2.4 sin(ω<i>t</i> − 90°)</b></div>
          </div></div>
          <div class="srow frow fgap2"><span class="sn"></span><span class="sl">b.</span><div class="sb-txt">
            <div class="fline"><i>I<sub>m</sub></i> = <span class="fr fr-a"><span><i>V<sub>m</sub></i></span><span><i>X<sub>L</sub></i></span></span> = <span class="fr"><span>30 V</span><span>50 Ω</span></span> = 0.6 A, <i>i</i> = <b>0.6 sin(ω<i>t</i> − 70°)</b></div>
          </div></div>
          <div class="srow sgap3"><span class="sn"></span><span class="sl">c.</span><div class="sb-txt">
            <div>υ = 40 sin(ω<i>t</i> + 100°)</div>
            <div class="fline"><i>I<sub>m</sub></i> = <span class="fr fr-a"><span><i>V<sub>m</sub></i></span><span><i>X<sub>L</sub></i></span></span> = <span class="fr"><span>40 V</span><span>50 Ω</span></span> = 0.8 A, <i>i</i> = <b>0.8 sin(ω<i>t</i> + 10°)</b></div>
          </div></div>
          <div class="srow sgap4"><span class="sn"></span><span class="sl">d.</span><div class="sb-txt">
            <div>υ = 80 sin(377<i>t</i> + 220°)</div>
            <div class="fline"><i>I<sub>m</sub></i> = <span class="fr fr-a"><span><i>V<sub>m</sub></i></span><span><i>X<sub>L</sub></i></span></span> = <span class="fr"><span>80 V</span><span>50 Ω</span></span> = 1.6 A, <i>i</i> = <b>1.6 sin(377<i>t</i> + 130°)</b></div>
          </div></div>
          <div class="srow sgap3"><span class="sn">12.</span><span class="sl">a.</span><div class="sb-txt">
            <div><i>X<sub>L</sub></i> = ω<i>L</i> = (60 rad/s)(0.2 H) = 12 Ω</div>
            <div><i>I<sub>m</sub></i> = <i>V<sub>m</sub></i>/<i>X<sub>L</sub></i> = 1.5 V/12 Ω = 0.125 A</div>
            <div><i>i</i> = <b>0.125 sin(60<i>t</i> − 90°)</b></div>
          </div></div>
          <div class="srow sgap"><span class="sn"></span><span class="sl">b.</span><div class="sb-txt">
            <div><i>X<sub>L</sub></i> = ω<i>L</i> = (10 rad/s)(0.2 H) = 2 Ω</div>
            <div><i>I<sub>m</sub></i> = <i>V<sub>m</sub></i>/<i>X<sub>L</sub></i> = 16 mV/2 Ω = 8 mA</div>
            <div><i>i</i> = 8 × 10<sup>−3</sup> sin(<i>t</i> + 2° − 90°) = <b>8 × 10<sup>−3</sup> sin(<i>t</i> − 88°)</b></div>
          </div></div>
          <div class="srow sgap"><span class="sn"></span><span class="sl">c.</span><div class="sb-txt">
            <div>υ = 4.8 sin(0.05<i>t</i> + 230°)</div>
            <div><i>X<sub>L</sub></i> = ω<i>L</i> = (0.05 rad/s)(0.2 H) = 0.01 Ω</div>
            <div><i>I<sub>m</sub></i> = <i>V<sub>m</sub></i>/<i>X<sub>L</sub></i> = 4.8 V/0.01 Ω = 480 A</div>
            <div><i>i</i> = 480 sin(0.05<i>t</i> + 230° − 90°) = <b>480 sin(0.05<i>t</i> + 140°)</b></div>
          </div></div>
          <div class="srow sgap"><span class="sn"></span><span class="sl">d.</span><div class="sb-txt">
            <div>υ = 9 × 10<sup>−3</sup> sin(377<i>t</i> + 90°)</div>
            <div><i>X<sub>L</sub></i> = ω<i>L</i> = (377 rad/s)(0.2 H) = 75.4 Ω</div>
            <div><i>I<sub>m</sub></i> = <i>V<sub>m</sub></i>/<i>X<sub>L</sub></i> = 9 mV/75.4 Ω = 0.119 mA</div>
            <div><i>i</i> = <b>0.119 × 10<sup>−3</sup> sin 377<i>t</i></b></div>
          </div></div>
        </article>
      </div>
    </div>
    <div class="vscroll">
      <span class="tri-u"></span>
      <span class="vtick"></span>
      <span class="vmarks"></span>
      <span class="vthumb vthumb-r"></span>
      <span class="tri-d"></span>
    </div>
    <aside class="sidebar">
      <div class="sb"><svg class="ic i24"><use href="#sSearch"/></svg></div>
      <div class="sb"><svg class="ic i24"><use href="#sTag"/></svg></div>
      <div class="sb"><svg class="ic i24"><use href="#sBox"/></svg></div>
      <div class="sb"><svg class="ic i24"><use href="#sChess"/></svg></div>
      <div class="sb"><svg class="ic i24"><use href="#sBing"/></svg></div>
      <div class="sb"><svg class="ic i24"><use href="#sOut"/></svg></div>
      <div class="sb"><svg class="ic i24"><use href="#sTg"/></svg></div>
      <span class="sb-sep sb-sep1"></span>
      <svg class="ic i18 sb-plus"><use href="#plus"/></svg>
      <span class="sb-sep sb-sep2"></span>
      <svg class="ic i24 sb-gear"><use href="#gear"/></svg>
    </aside>
  </div>
</section>
</main>

<footer class="taskbar">
  <div class="tb-weather">
    <span class="wx-ic"><svg class="ic i32"><use href="#weather"/></svg><span class="wx-badge">1</span></span>
    <div class="wx-t"><div>74°F</div><div class="wx-sub">Haze</div></div>
  </div>
  <div class="tb-cell"><svg class="ic i30"><use href="#win"/></svg></div>
  <div class="tb-search">
    <svg class="ic i20"><use href="#search"/></svg>
    <span class="tb-search-t">Search</span>
    <svg class="scene"><use href="#scene"/></svg>
  </div>
  <div class="tb-apps">
    <div class="tb-cell"><svg class="ic i32"><use href="#tview"/></svg></div>
    <div class="tb-cell tb-active"><span class="tb-act-bg"></span><svg class="ic i32 rel"><use href="#edge"/></svg><span class="bar"></span></div>
    <div class="tb-cell"><svg class="ic i32"><use href="#vsc"/></svg></div>
    <div class="tb-cell pip"><svg class="ic i32"><use href="#folder"/></svg></div>
    <div class="tb-cell"><svg class="ic i30"><use href="#store"/></svg></div>
    <div class="tb-cell pip"><svg class="ic i30"><use href="#spot"/></svg></div>
    <div class="tb-cell pip"><svg class="ic i28"><use href="#teams"/></svg><span class="bdg bdg-red">9+</span><span class="new">NEW</span></div>
    <div class="tb-cell pip"><svg class="ic i30"><use href="#ppt"/></svg></div>
    <div class="tb-cell pip"><svg class="ic i26"><use href="#chip"/></svg></div>
    <div class="tb-cell pip"><svg class="ic i30"><use href="#paint"/></svg></div>
    <div class="tb-cell pip"><svg class="ic i32"><use href="#snip"/></svg></div>
    <div class="tb-cell pip"><svg class="ic i32"><use href="#disc"/></svg><span class="bdg bdg-pink">9+</span></div>
  </div>
  <div class="tray">
    <svg class="ic i18"><use href="#tup"/></svg>
    <svg class="ic i24 m20"><use href="#cloud"/></svg>
    <svg class="ic i22 m17"><use href="#wifi"/></svg>
    <svg class="ic i22 m9"><use href="#vol"/></svg>
    <svg class="ic i22 m9"><use href="#batt"/></svg>
    <div class="clock"><div>2:50 AM</div><div>5/7/2024</div></div>
    <svg class="ic i20 m8"><use href="#bell"/></svg>
    <span class="pre m18"><svg class="ic i30"><use href="#copilot2"/></svg><span class="pre-t">PRE</span></span>
  </div>
</footer>
</div>
</body>
</html>
```
FILE: styles.css
```css
* { box-sizing: border-box; }
html, body { margin: 0; padding: 0; }
body { width: 1920px; height: 1080px; overflow: hidden; font-family: "Open Sans", "Noto Sans", sans-serif; color: #eee; background: #222; }
.sprite { position: absolute; width: 0; height: 0; }
.desktop { display: flex; flex-direction: column; width: 1920px; height: 1080px; }
.windows { display: flex; height: 1020px; }

.win { position: relative; width: 960px; height: 1020px; display: flex; flex-direction: column; background: #3a3a3a; border-top: 1px solid #6e6e6e; border-bottom: 2px solid #6e6e6e; padding-bottom: 2px; }
.win-left { border-right: 1px solid #777; }
.win-right { border-left: 1px solid #777; }
.win-right .titlebar, .win-right .navbar, .win-right .body { margin-left: -1px; }
.win-left .pane, .win-right .pane { flex: 0 0 880px; }

.ic { display: block; flex: none; fill: none; stroke: currentColor; stroke-width: 1.4; }
.i14 { width: 14px; height: 14px; } .i16 { width: 16px; height: 16px; } .i18 { width: 18px; height: 18px; }
.i20 { width: 20px; height: 20px; } .i22 { width: 22px; height: 22px; } .i24 { width: 24px; height: 24px; }
.i26 { width: 26px; height: 26px; } .i28 { width: 28px; height: 28px; } .i30 { width: 30px; height: 30px; } .i32 { width: 32px; height: 32px; }
.m7 { margin-left: 7px; } .m8 { margin-left: 8px; } .m9 { margin-left: 9px; } .m12 { margin-left: 12px; } .m13 { margin-left: 13px; } .m14 { margin-left: 14px; }
.m15 { margin-left: 15px; } .m16 { margin-left: 16px; } .m17 { margin-left: 17px; } .m18 { margin-left: 18px; } .m20 { margin-left: 20px; } .m21 { margin-left: 21px; } .m22 { margin-left: 22px; }
.m24 { margin-left: 24px; } .m26 { margin-left: 26px; } .m28 { margin-left: 28px; } .m30 { margin-left: 30px; } .m31 { margin-left: 31px; } .m33 { margin-left: 33px; } .m87 { margin-left: 87px; }
.faint { color: #8f8f8f; } .soft { color: #b5b5b5; } .disabled { color: #6f6f6f; } .star-on { color: #4a94dc; fill: #4a94dc; }

/* title bar */
.titlebar { display: flex; align-items: flex-end; height: 50px; flex: none; background: #2e2e2e; }
.win-right .titlebar { background: #202020; }
.titlebar > div[class^="c-"] { display: flex; align-items: center; justify-content: center; height: 50px; }
.c-avatar { width: 58px; } .c-ws { width: 40px; } .c-vt { width: 66px; }
.avatar { width: 30px; height: 30px; border-radius: 50%; background: #f2f2f2; display: block; }
.ava-ic { display: block; width: 30px; height: 30px; }
.vsep { width: 1px; height: 30px; background: #666; margin: 0 0 10px 1px; }
.tab { display: flex; align-items: center; height: 39px; padding-left: 13px; font-size: 14.3px; }
.tab-idle { width: 261px; color: #d5d5d5; }
.tab-wide { width: 263px; }
.tab-r { width: 299px; margin-left: 1px; }
.tab-on { background: #3a3a3a; border-radius: 10px 10px 0 0; }
.pdf-ic { position: relative; width: 19px; height: 23px; flex: none; }
.pdf-svg { display: block; width: 19px; height: 23px; }
.pdf-tx { position: absolute; left: 1px; top: 7px; width: 18px; text-align: center; font: 700 7px/10px "Liberation Sans", sans-serif; color: #fff; }
.tab-name { flex: 1; margin-left: 13px; white-space: nowrap; overflow: hidden; -webkit-mask-image: linear-gradient(90deg, #000 88%, transparent 100%); mask-image: linear-gradient(90deg, #000 88%, transparent 100%); }
.dim-name { color: #bdbdbd; }
.tab-x { margin: 0 12px 0 10px; color: #e5e5e5; }
.tab-wide .tab-x { margin-right: 15px; }
.new-tab { margin: 0 0 9px 17px; color: #ddd; }
.winctl { margin-left: auto; height: 50px; display: flex; align-items: center; padding-bottom: 10px; gap: 42px; padding-right: 20px; color: #eee; }
.winctl-dim { color: #6f6f6f; }

/* nav bar */
.navbar { display: flex; align-items: center; height: 48px; flex: none; padding-left: 24px; background: #3a3a3a; padding-bottom: 2px; }
.addr { display: flex; align-items: center; width: 496px; height: 37px; padding: 0 16px 0 22px; border-radius: 19px; background: #2a2a2a; font-size: 17px; color: #f3f3f3; letter-spacing: -.2px; }
.addr-file { margin-left: 10px; }
.addr-sep { width: 1px; height: 26px; background: #808080; margin: 0 17px 0 14px; }
.addr-url { flex: 1; white-space: nowrap; overflow: hidden; }
.addr-btn { display: flex; align-items: center; justify-content: center; width: 49px; height: 33px; border-radius: 17px; background: #5a5a5a; margin-left: 6px; }

/* body */
.body { flex: 1; min-height: 0; display: flex; padding-left: 6px; }
.pane { display: flex; flex-direction: column; min-width: 0; background: #3c3c3c; }
.pdfbar { display: flex; align-items: center; height: 51px; flex: none; padding: 0 16px; background: #3c3c3c; border-bottom: 1px solid #2e2e2e; border-radius: 8px 0 0 0; font-size: 15px; }
.tsep { width: 1px; height: 28px; background: #5e5e5e; flex: none; }
.pagebox { width: 50px; height: 40px; background: #454545; border: 1px solid #707070; border-radius: 2px; display: flex; align-items: center; justify-content: center; }
.pagecount { white-space: nowrap; }
.pdfbar-r { margin-left: auto; display: flex; align-items: center; }
.tool-on { display: flex; align-items: center; justify-content: center; width: 46px; height: 40px; background: #4a4a4a; border-radius: 4px; margin-right: -11px; }
.win-right .tool-on + .tsep { margin-left: 17px; }

.viewer { flex: 1; min-height: 0; overflow: hidden; background: #333; }
.viewer-left { padding-right: 7px; }
.prev-page { height: 12px; width: 943px; margin-left: -70px; background: #fff; }
.book { width: 943px; margin: 20px 0 0 -70px; height: 900px; background: #fff; color: #1d1d1d; padding-left: 12px; padding-top: 59px; }
.runhead { display: flex; height: 38px; }
.runhead-t { margin: 22px 0 0 56px; font: 400 16.6px/20px "Open Sans", sans-serif; color: #333; white-space: nowrap; }
.angle { position: relative; width: 34px; height: 38px; margin-left: 443px; }
.angle-svg { display: block; width: 34px; height: 38px; }
.angle-t { position: absolute; left: 16px; top: 17px; font: italic 15px/20px "Liberation Serif", serif; color: #111; }
.cols { display: flex; gap: 30px; margin-top: 33px; }
.col { width: 395px; flex: none; font: 15.6px/19.5px "Liberation Serif", serif; white-space: nowrap; }
.col-b { padding-top: 2px; }
.prob-h { margin: 0 0 0 -13px; font: 700 22.5px/28px "Noto Sans", sans-serif; color: #1a4da0; }
.sec { margin: 0; display: flex; font: 700 15.5px/19.5px "Noto Sans", sans-serif; color: #111; }
.sec-1 { margin-top: 11px; }
.sec-2 { margin-top: 35px; }
.sec-no { width: 140px; margin-left: -44px; text-align: right; color: #1a4da0; flex: none; white-space: nowrap; word-spacing: 1px; }
.sec-no2 { width: 85px; margin-left: -24px; color: #111; }
.sec-ti { margin-left: 17px; }
.sec-ti2 { margin-left: 6px; }
.prob { display: flex; }
.n { width: 28px; flex: none; font-weight: 700; }
.bd { width: 367px; flex: none; }
.p-first { margin-top: 4px; }
.p-tight { margin-top: 5.5px; }
.p-sec { margin-top: 17px; }
.p-gap { margin-top: 21px; }
.eq { width: 100%; text-align: center; word-spacing: 1px; }
.eq-1 { margin-top: 12.500px; padding-left: 28px; }
.eq-2 { margin-top: 12px; padding-left: 28px; }
.j { text-align: justify; text-align-last: justify; white-space: normal; }
.lab { display: inline-block; width: 21px; }
.opt, .opt2 { word-spacing: 1px; }
.opt2 { display: grid; grid-template-columns: 191px 1fr; }
.opt2 .lab { width: 23px; }
.op { margin: 0 3.5px; }
.neg { margin-right: 2px; }
.and { margin-top: 5.5px; }
.col sup { font-size: .65em; line-height: 0; vertical-align: .55em; margin: 0 2px 0 1px; }
.root { margin-left: 5px; }
.rad { text-decoration: overline; }

/* solutions */
.viewer-right { display: flex; flex-direction: column; align-items: center; gap: 12px; }
.sol { width: 647px; flex: none; background: #fff; color: #1a1a1a; font: 11.75px/14.4px "Liberation Serif", serif; white-space: nowrap; filter: blur(.25px); }
.sol-1 { height: 242px; padding: 1px 0 0 77px; }
.sol-2 { height: 611px; padding: 78px 0 0 95px; }
.srow { display: flex; }
.frow { align-items: center; }
.sn { width: 37px; flex: none; }
.sl { width: 23px; flex: none; }
.sgap { margin-top: 13.500px; }
.fgap { margin-top: 13px; }
.fgap2 { margin-top: 18px; }
.sgap3 { margin-top: 17px; }
.sgap4 { margin-top: 18.500px; }
.sol sub { font-size: .62em; line-height: 0; vertical-align: -.2em; }
.sol sup { font-size: .62em; line-height: 0; vertical-align: .55em; }
.fline { height: 29px; line-height: 29px; display: block; }
.fr { display: inline-flex; flex-direction: column; vertical-align: middle; text-align: center; margin: 0 1px; line-height: 14px; min-width: 27px; font-size: 12.5px; }
.fr > span:first-child { border-bottom: 1px solid #111; }
.fr-a { min-width: 15px; }
.sfoot { display: flex; justify-content: space-between; align-items: center; width: 494px; margin-top: 32px; height: 14px; font: 700 11px/14px "Liberation Sans", sans-serif; }
.ch-hit { background: #ff0; padding: 0 1px; line-height: 12px; }

/* find bar */
.findbar { position: absolute; left: 164px; top: 91px; z-index: 3; width: 458px; height: 53px; display: flex; align-items: center; padding: 0 0 2px 10px; background: #4e4e4e; border: 1px solid #5a5a5a; border-radius: 12px; font-size: 14.8px; color: #f0f0f0; }
.find-q { width: 256px; white-space: nowrap; }
.caret { display: inline-block; width: 1px; height: 22px; background: #fff; vertical-align: -6px; margin-left: 1px; }
.find-n { color: #aab3c4; width: 50px; }
.find-sep { width: 1px; height: 30px; background: #6a6a6a; }

/* scrollbars */
.vscroll { position: relative; width: 19px; flex: none; background: #2a2a2a; border-radius: 6px; }
.tri-u { position: absolute; left: 3px; top: 11px; border: 6.500px solid transparent; border-top: 0; border-bottom: 9px solid #a8a8a8; }
.tri-d { position: absolute; left: 3px; bottom: 28px; border: 6.500px solid transparent; border-bottom: 0; border-top: 9px solid #a8a8a8; }
.vthumb { position: absolute; left: 4px; width: 11px; border-radius: 5px; background: #b0b0b0; }
.vthumb-l { top: 448px; height: 21px; }
.vthumb-r { top: 407px; height: 12px; }
.vtick { position: absolute; left: 0; top: 31px; width: 19px; height: 3px; background: #f0c000; }
.vmarks { position: absolute; left: 0; top: 408px; width: 19px; height: 38px; background: repeating-linear-gradient(180deg, #f0c000 0 3px, #d8a800 3px 4px); }
.hscroll { display: flex; align-items: center; height: 18px; flex: none; background: #2f2f2f; padding: 0 0 0 9px; }
.tri-l { border: 6px solid transparent; border-left: 0; border-right: 9px solid #999; }
.hthumb { width: 671px; height: 11px; margin-left: 161px; border-radius: 5px; background: #9a9a9a; }
.tri-r { margin-left: 10px; border: 6px solid transparent; border-right: 0; border-left: 9px solid #999; }

/* sidebar */
.sidebar { flex: 1; display: flex; flex-direction: column; align-items: center; padding-top: 2px; padding-bottom: 12px; color: #ddd; }
.sb { display: flex; align-items: center; justify-content: center; height: 50px; width: 100%; }
.sb-sep { width: 36px; height: 1px; background: #6b6b6b; flex: none; }
.sb-sep1 { margin-top: 16px; }
.sb-sep2 { margin-top: auto; margin-bottom: 15px; }
.sb-plus { margin-top: 30px; color: #ddd; }
.sb-gear { color: #ddd; }

/* taskbar */
.taskbar { position: relative; display: flex; align-items: stretch; height: 60px; flex: none; background: linear-gradient(90deg, #3f1411 0%, #3d1512 22%, #3a2219 38%, #2f261a 50%, #2a2519 62%, #30241a 78%, #37211a 84%, #2a2518 100%); color: #f2f2f2; }
.tb-weather { width: 461px; display: flex; align-items: center; padding-left: 24px; font-size: 15px; line-height: 20px; }
.wx-ic { position: relative; }
.wx-badge { position: absolute; left: 15px; top: -10px; width: 20px; height: 20px; border-radius: 50%; background: #f59cad; color: #222; text-align: center; font-size: 13px; line-height: 20px; }
.wx-t { margin-left: 8px; }
.wx-sub { color: #ddd; }
.tb-cell { position: relative; width: 55px; display: flex; align-items: center; justify-content: center; padding-bottom: 2px; }
.tb-search { display: flex; align-items: center; width: 275px; height: 40px; margin: 10px 3px 0 5px; padding-left: 15px; border-radius: 20px; background: rgba(255,255,255,.13); font-size: 17px; color: #ddd; }
.tb-search-t { margin-left: 11px; }
.scene { display: block; width: 56px; height: 40px; margin-left: auto; margin-right: 9px; }
.tb-apps { display: flex; }
.tb-act-bg { position: absolute; left: 2px; top: 5px; width: 44px; height: 50px; border-radius: 5px; background: rgba(255,255,255,.07); }
.rel { position: relative; }
.bar { position: absolute; left: 18px; bottom: 3px; width: 20px; height: 4px; border-radius: 2px; background: #5cc7f5; }
.pip::after { content: ""; position: absolute; left: 25px; bottom: 6px; width: 6px; height: 4px; border-radius: 2px; background: #8a8a8a; }
.bdg { position: absolute; left: 31px; top: 8px; width: 20px; height: 20px; border-radius: 50%; color: #fff; text-align: center; font-size: 12px; font-weight: 600; line-height: 20px; }
.bdg-red { background: #c4302b; }
.bdg-pink { background: #e5646a; }
.new { position: absolute; left: 16px; top: 37px; width: 24px; height: 12px; background: #24cfe0; border-radius: 2px; color: #123; font: 700 8px/12px "Liberation Sans", sans-serif; text-align: center; }
.tray { margin-left: auto; padding-right: 28px; display: flex; align-items: center; }
.clock { width: 82px; text-align: right; font-size: 15px; line-height: 20px; white-space: nowrap; }
.pre { position: relative; display: block; }
.pre-t { position: absolute; left: 7px; top: 18px; width: 23px; height: 14px; border-radius: 2px; background: #f2b705; color: #222; font: 700 10px/14px "Liberation Sans", sans-serif; text-align: center; }
```
